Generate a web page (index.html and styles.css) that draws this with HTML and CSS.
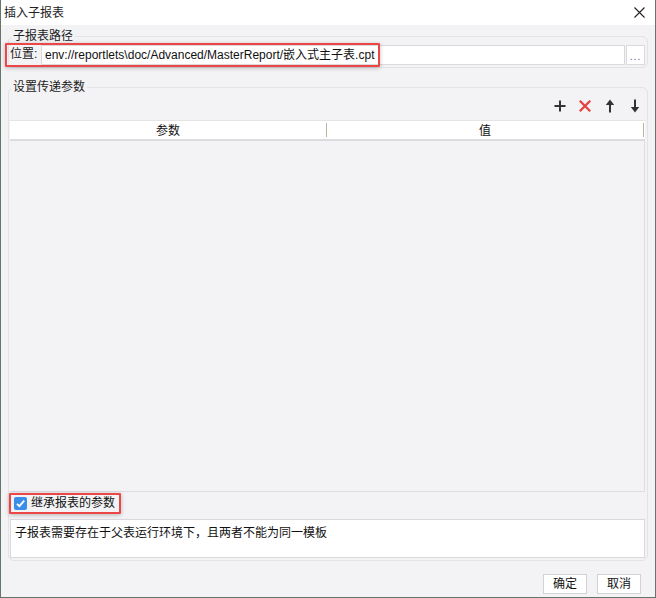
FILE: index.html
```html
<!DOCTYPE html>
<html lang="zh-CN">
<head>
    <meta charset="UTF-8">
    <title>插入子报表</title>
    <link rel="stylesheet" href="styles.css">
</head>
<body>
    <div class="window">
        <div class="titlebar">
            <span class="title">插入子报表</span>
            <svg class="close" width="11" height="11" viewBox="0 0 11 11">
                <path d="M0.5 0.5L10.5 10.5M10.5 0.5L0.5 10.5" stroke="#222" stroke-width="1.1" fill="none"/>
            </svg>
        </div>
        <div class="content">
            <fieldset class="group path-group">
                <legend>子报表路径</legend>
                <div class="path-row">
                    <span class="path-label">位置:</span>
                    <div class="path-field">env://reportlets\doc/Advanced/MasterReport/嵌入式主子表.cpt</div>
                    <div class="browse">...</div>
                </div>
            </fieldset>
            <fieldset class="group param-group">
                <legend>设置传递参数</legend>
                <div class="toolbar">
                    <svg width="14" height="14" viewBox="0 0 14 14"><path d="M7 1.5V12.5M1.5 7H12.5" stroke="#333" stroke-width="2" fill="none"/></svg>
                    <svg width="14" height="14" viewBox="0 0 14 14"><path d="M1.8 1.8L12.2 12.2M12.2 1.8L1.8 12.2" stroke="#e8403f" stroke-width="2.3" fill="none"/></svg>
                    <svg width="14" height="14" viewBox="0 0 14 14"><path d="M7 5V13.5" stroke="#333" stroke-width="2" fill="none"/><polygon points="7,0.5 2.8,6 11.2,6" fill="#333"/></svg>
                    <svg width="14" height="14" viewBox="0 0 14 14"><path d="M7 0.5V9" stroke="#333" stroke-width="2" fill="none"/><polygon points="7,13.5 2.8,8 11.2,8" fill="#333"/></svg>
                </div>
                <div class="param-table">
                    <div class="thead">
                        <div class="th">参数</div>
                        <div class="sep"></div>
                        <div class="th">值</div>
                        <div class="sep"></div>
                    </div>
                    <div class="tbody"></div>
                </div>
                <label class="inherit">
                    <svg class="check" width="13" height="13" viewBox="0 0 13 13">
                        <rect width="13" height="13" rx="2" fill="#3a8ee8"/>
                        <path d="M3 6.8L5.4 9.2L10.2 3.6" stroke="#fff" stroke-width="1.8" fill="none"/>
                    </svg>
                    继承报表的参数
                </label>
                <div class="note">子报表需要存在于父表运行环境下，且两者不能为同一模板</div>
            </fieldset>
            <div class="actions">
                <div class="btn">确定</div>
                <div class="btn">取消</div>
            </div>
        </div>
        <div class="mark mark-path"></div>
        <div class="mark mark-inherit"></div>
    </div>
</body>
</html>
```

FILE: styles.css
```css
* {
    box-sizing: border-box;
}
body {
    margin: 0;
    font-family: "Liberation Sans", "Noto Sans CJK SC", sans-serif;
    font-size: 12px;
    color: #222;
}
.window {
    position: relative;
    width: 656px;
    height: 598px;
    border: 1px solid #66756b;
    border-top: none;
    background: #f3f3f5;
    display: flex;
    flex-direction: column;
}
.titlebar {
    height: 25px;
    flex: none;
    background: #fff;
    display: flex;
    align-items: center;
    justify-content: space-between;
    padding: 0 10px 0 3px;
    line-height: 14px;
}
.content {
    padding: 4px 7px 0;
    display: flex;
    flex-direction: column;
}
.group {
    margin: 0;
    min-width: 0;
    border: 1px solid #e2e2e7;
    border-radius: 6px;
}
.group legend {
    padding: 0 2px;
    margin-left: 1px;
    line-height: 14px;
    color: #222;
}
.path-group {
    padding: 2px 2px 2px 1px;
}
.path-row {
    display: flex;
    height: 20px;
    line-height: 18px;
}
.path-label {
    width: 31px;
    flex: none;
}
.path-field {
    flex: 1;
    background: #fff;
    border: 1px solid #dadada;
    padding-left: 3px;
    color: #111;
    white-space: nowrap;
    overflow: hidden;
}
.browse {
    width: 19px;
    margin-left: 1px;
    background: #fff;
    border: 1px solid #dadada;
    font-size: 10px;
    line-height: 22px;
    letter-spacing: 1px;
    text-align: center;
    color: #6e4f84;
}
.param-group {
    margin-top: 12px;
    padding: 0 2px 2px 1px;
}
.toolbar {
    display: flex;
    justify-content: flex-end;
    gap: 11px;
    padding: 5px 3px 0 0;
    height: 19px;
    margin-bottom: 7px;
}
.param-table {
    border-top: 1px solid #e4e4e6;
}
.thead {
    display: flex;
    align-items: center;
    height: 20px;
    background: #fff;
    border-bottom: 2px solid #dcdcde;
    padding-right: 1px;
}
.th {
    flex: 1;
    text-align: center;
    line-height: 20px;
    padding-top: 1px;
    color: #111;
}
.sep {
    width: 1px;
    height: 14px;
    background: #b7b3a5;
}
.tbody {
    height: 351px;
    border-right: 1px solid #dedee2;
    border-bottom: 1px solid #dedee2;
}
.inherit {
    display: flex;
    align-items: center;
    height: 22px;
    padding-left: 4px;
    gap: 4px;
    line-height: 14px;
    color: #111;
}
.check {
    flex: none;
}
.note {
    margin-top: 5px;
    height: 39px;
    background: #fff;
    border: 1px solid #d9d9dc;
    padding: 5px 4px 4px;
    line-height: 16px;
    color: #111;
}
.actions {
    display: flex;
    justify-content: flex-end;
    gap: 10px;
    margin-top: 13px;
    padding-right: 7px;
}
.btn {
    width: 44px;
    height: 20px;
    background: #fff;
    border: 1px solid #d2d2d4;
    text-align: center;
    line-height: 18px;
    color: #111;
}
.mark {
    position: absolute;
    border: 2px solid #ec4646;
    border-radius: 1px;
    box-shadow: 0 1px 4px rgba(0, 0, 0, 0.25);
}
.mark-path {
    left: 4px;
    top: 43px;
    width: 375px;
    height: 24px;
}
.mark-inherit {
    left: 8px;
    top: 493px;
    width: 112px;
    height: 21px;
}
```
